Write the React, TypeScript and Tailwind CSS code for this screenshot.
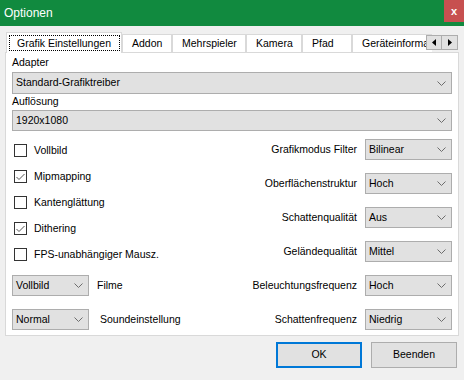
import { ReactNode } from 'react';

const font = { fontFamily: '"Liberation Sans", Arial, sans-serif' };

const Chevron = () => (
  <svg width="9" height="5" viewBox="0 0 9 5" className="shrink-0">
    <path d="M0.5 0.5 L4.5 4.5 L8.5 0.5" fill="none" stroke="#6d6d6d" strokeWidth="1" />
  </svg>
);

const Select = ({ value, className = '' }: { value: string; className?: string }) => (
  <div
    className={`flex items-center justify-between border border-[#adadad] bg-[#e1e1e1] pl-[3px] pr-[5px] text-[10.5px] text-black ${className}`}
  >
    <span>{value}</span>
    <Chevron />
  </div>
);

const Checkbox = ({ label, checked }: { label: string; checked?: boolean }) => (
  <div className="flex h-[13px] items-center gap-[7px]">
    <div className="flex h-[13px] w-[13px] items-center justify-center border border-[#333333] bg-white">
      {checked && (
        <svg width="9" height="8" viewBox="0 0 9 8">
          <path d="M0.5 4 L3 6.5 L8.5 1" fill="none" stroke="#555" strokeWidth="1" />
        </svg>
      )}
    </div>
    <span className="text-[10.5px] text-black">{label}</span>
  </div>
);

const RightRow = ({ label, value }: { label: string; value: string }) => (
  <div className="flex h-[21px] items-center justify-end gap-[8px]">
    <span className="text-[10.5px] text-black">{label}</span>
    <Select value={value} className="h-[21px] w-[87px]" />
  </div>
);

const Tab = ({ children, w }: { children: ReactNode; w: string }) => (
  <div className={`flex h-[18px] items-center border border-b-0 border-[#d9d9d9] bg-white pl-[9px] text-[10.5px] text-black ${w}`}>
    {children}
  </div>
);

export default function App() {
  return (
    <div className="flex h-[380px] w-[464px] flex-col overflow-hidden bg-[#f0f0f0]" style={font}>
      <div className="flex h-[26px] shrink-0 items-start justify-between bg-[#118a3f]">
        <span className="pl-[4px] pt-[4px] text-[12px] text-white">Optionen</span>
        <div className="flex h-[22px] w-[20px] items-center justify-center bg-[#c75050] text-[11px] font-bold text-white">
          x
        </div>
      </div>

      <div className="relative mt-[6px] flex h-[20px] shrink-0 items-end pl-[6px]">
        <div className="relative z-10 -mb-px flex h-[21px] w-[116px] items-center border border-b-0 border-[#d9d9d9] bg-white pl-[2px]">
          <span className="border border-dotted border-black pl-[7px] pr-[8px] text-[10.5px] leading-[14px] text-black">
            Grafik Einstellungen
          </span>
        </div>
        <Tab w="w-[50px]">Addon</Tab>
        <Tab w="w-[74px]">Mehrspieler</Tab>
        <Tab w="w-[56px]">Kamera</Tab>
        <Tab w="w-[50px]">Pfad</Tab>
        <div className="flex h-[18px] w-[80px] items-center overflow-hidden whitespace-nowrap border border-b-0 border-r-0 border-[#d9d9d9] bg-white pl-[9px] text-[10.5px] text-black">
          Geräteinforma
        </div>
        <div className="absolute right-[6px] top-[3px] flex">
          <div className="flex h-[15px] w-[16px] items-center justify-center border border-[#adadad] bg-[#e1e1e1]">
            <svg width="4" height="7" viewBox="0 0 4 7">
              <path d="M4 0 L0 3.5 L4 7 Z" fill="#000" />
            </svg>
          </div>
          <div className="flex h-[15px] w-[16px] items-center justify-center border border-l-0 border-[#adadad] bg-[#e1e1e1]">
            <svg width="4" height="7" viewBox="0 0 4 7">
              <path d="M0 0 L4 3.5 L0 7 Z" fill="#000" />
            </svg>
          </div>
        </div>
      </div>

      <div className="mx-[5px] flex h-[284px] shrink-0 flex-col border border-[#d9d9d9] bg-white px-[6px]">
        <div className="flex h-[18px] items-end text-[10.5px] text-black">Adapter</div>
        <Select value="Standard-Grafiktreiber" className="mt-px h-[22px] w-full" />
        <div className="flex h-[16px] items-end text-[10.5px] text-black">Auflösung</div>
        <Select value="1920x1080" className="h-[21px] w-full" />

        <div className="mt-[8px] flex">
          <div className="flex flex-1 flex-col pl-[2px]">
            <div className="mt-[5px] flex flex-col gap-[13px]">
              <Checkbox label="Vollbild" />
              <Checkbox label="Mipmapping" checked />
              <Checkbox label="Kantenglättung" />
              <Checkbox label="Dithering" checked />
              <Checkbox label="FPS-unabhängiger Mausz." />
            </div>
            <div className="-ml-[2px] mt-[14px] flex flex-col gap-[13px]">
              <div className="flex h-[21px] items-center">
                <Select value="Vollbild" className="h-[21px] w-[77px]" />
                <span className="ml-[8px] text-[10.5px] text-black">Filme</span>
              </div>
              <div className="flex h-[21px] items-center">
                <Select value="Normal" className="h-[21px] w-[77px]" />
                <span className="ml-[11px] text-[10.5px] text-black">Soundeinstellung</span>
              </div>
            </div>
          </div>
          <div className="flex flex-col gap-[13px]">
            <RightRow label="Grafikmodus Filter" value="Bilinear" />
            <RightRow label="Oberflächenstruktur" value="Hoch" />
            <RightRow label="Schattenqualität" value="Aus" />
            <RightRow label="Geländequalität" value="Mittel" />
            <RightRow label="Beleuchtungsfrequenz" value="Hoch" />
            <RightRow label="Schattenfrequenz" value="Niedrig" />
          </div>
        </div>
      </div>

      <div className="mt-[6px] flex justify-end gap-[9px] pr-[7px]">
        <button className="h-[26px] w-[86px] border-2 border-[#0078d7] bg-[#e1e1e1] text-[10.5px] text-black">
          OK
        </button>
        <button className="h-[26px] w-[86px] border border-[#adadad] bg-[#e1e1e1] text-[10.5px] text-black">
          Beenden
        </button>
      </div>
    </div>
  );
}
